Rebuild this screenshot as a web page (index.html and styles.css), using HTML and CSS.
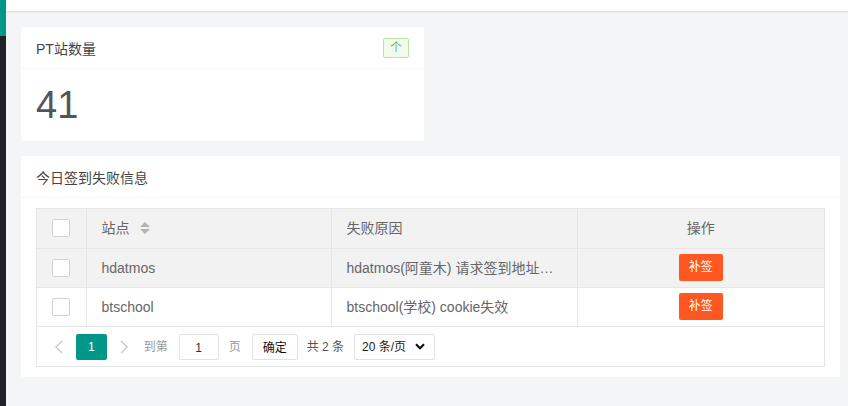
FILE: index.html
```html
<!DOCTYPE html>
<html lang="zh-CN">
<head>
  <meta charset="UTF-8" />
  <meta name="viewport" content="width=device-width, initial-scale=1.0"/>
  <title>PT站签到</title>
  <link rel="stylesheet" href="styles.css">
</head>
<body>
  <div class="side">
    <div class="side-logo"></div>
  </div>

  <div class="main">
    <div class="header"></div>

    <div class="content">
      <div class="card card-small">
        <div class="card-header">
          <span>PT站数量</span>
          <span class="badge">个</span>
        </div>
        <div class="card-body">
          <p class="big-font">41</p>
        </div>
      </div>

      <div class="card">
        <div class="card-header">
          <span>今日签到失败信息</span>
        </div>
        <div class="card-body">
          <div class="table-box">
            <table class="table">
              <colgroup>
                <col style="width: 49px">
                <col style="width: 245px">
                <col style="width: 246px">
                <col>
              </colgroup>
              <thead>
                <tr>
                  <th class="check-cell"><span class="checkbox"></span></th>
                  <th>
                    <span class="sort-title">站点
                      <span class="sort">
                        <i class="sort-up"></i>
                        <i class="sort-down"></i>
                      </span>
                    </span>
                  </th>
                  <th>失败原因</th>
                  <th class="center">操作</th>
                </tr>
              </thead>
              <tbody>
                <tr class="hover">
                  <td class="check-cell"><span class="checkbox"></span></td>
                  <td><div class="cell">hdatmos</div></td>
                  <td><div class="cell">hdatmos(阿童木) 请求签到地址…</div></td>
                  <td class="action-cell"><button class="btn-danger">补签</button></td>
                </tr>
                <tr>
                  <td class="check-cell"><span class="checkbox"></span></td>
                  <td><div class="cell">btschool</div></td>
                  <td><div class="cell">btschool(学校) cookie失效</div></td>
                  <td class="action-cell"><button class="btn-danger">补签</button></td>
                </tr>
              </tbody>
            </table>

            <div class="pager">
              <a class="page-arrow">
                <svg width="8" height="14" viewBox="0 0 8 14"><path d="M7 1 L1 7 L7 13" fill="none" stroke="#c9c9c9" stroke-width="1.4"/></svg>
              </a>
              <span class="page-curr">1</span>
              <a class="page-arrow">
                <svg width="8" height="14" viewBox="0 0 8 14"><path d="M1 1 L7 7 L1 13" fill="none" stroke="#c9c9c9" stroke-width="1.4"/></svg>
              </a>
              <span class="page-text skip-label">到第</span>
              <span class="page-input">1</span>
              <span class="page-text">页</span>
              <button class="page-btn">确定</button>
              <span class="page-count">共 2 条</span>
              <span class="page-limit">
                20 条/页
                <svg width="10" height="7" viewBox="0 0 10 7"><path d="M1 1.2 L5 5.2 L9 1.2" fill="none" stroke="#111" stroke-width="2.2"/></svg>
              </span>
            </div>
          </div>
        </div>
      </div>
    </div>
  </div>
</body>
</html>
```

FILE: styles.css
```css
* {
  margin: 0;
  padding: 0;
  box-sizing: border-box;
}

body {
  font-family: "Liberation Sans", "Noto Sans CJK SC", sans-serif;
  font-size: 14px;
  color: #666;
  background-color: #f4f5f7;
  display: flex;
  min-height: 100vh;
}

.side {
  width: 6px;
  flex-shrink: 0;
  background-color: #20222a;
}

.side-logo {
  height: 36px;
  background-color: #009688;
}

.main {
  flex: 1;
  min-width: 0;
}

.header {
  height: 12px;
  background-color: #fff;
  border-bottom: 1px solid #e2e2e2;
  box-shadow: 0 1px 2px rgba(0, 0, 0, 0.05);
}

.content {
  display: flex;
  flex-direction: column;
  align-items: flex-start;
  gap: 15px;
  padding: 15px 8px 15px 15px;
}

.card {
  width: 100%;
  background-color: #fff;
  border-radius: 2px;
}

.card-small {
  width: 403px;
}

.card-header {
  height: 42px;
  padding: 0 15px;
  display: flex;
  align-items: center;
  justify-content: space-between;
  border-bottom: 1px solid #f6f6f6;
  color: #444;
}

.card-body {
  padding: 10px 15px;
}

.badge {
  height: 20px;
  line-height: 18px;
  padding: 0 6px;
  font-size: 12px;
  color: #5fb878;
  background-color: #f2fbeb;
  border: 1px solid #b8e6a0;
  border-radius: 2px;
}

.big-font {
  height: 52px;
  line-height: 52px;
  font-size: 38px;
  color: #555;
}

.table-box {
  border: 1px solid #e6e6e6;
}

.table {
  width: 100%;
  table-layout: fixed;
  border-collapse: collapse;
}

.table th,
.table td {
  height: 39px;
  padding: 0 15px;
  line-height: 20px;
  text-align: left;
  font-weight: normal;
  vertical-align: middle;
  border-right: 1px solid #e6e6e6;
  border-bottom: 1px solid #e6e6e6;
  color: #666;
}

.table th:last-child,
.table td:last-child {
  border-right: none;
}

.table thead tr,
.table tr.hover {
  background-color: #f2f2f2;
}

.table .center,
.table .action-cell {
  text-align: center;
}

.cell {
  height: 20px;
  white-space: nowrap;
  overflow: hidden;
}

.table .check-cell {
  text-align: center;
  padding: 0;
  line-height: 0;
}

.checkbox {
  display: inline-block;
  width: 18px;
  height: 18px;
  vertical-align: middle;
  background-color: #fff;
  border: 1px solid #d2d2d2;
  border-radius: 2px;
}

.sort-title {
  display: inline-flex;
  align-items: center;
}

.sort {
  display: inline-flex;
  flex-direction: column;
  gap: 2px;
  margin-left: 10px;
}

.sort i {
  width: 0;
  height: 0;
  border-left: 5px solid transparent;
  border-right: 5px solid transparent;
}

.sort-up {
  border-bottom: 5px solid #b2b2b2;
}

.sort-down {
  border-top: 5px solid #b2b2b2;
}

.table .action-cell {
  line-height: 0;
}

.btn-danger {
  height: 27px;
  line-height: 27px;
  padding: 0 10px;
  font-family: inherit;
  font-size: 12px;
  color: #fff;
  background-color: #ff5722;
  border: none;
  border-radius: 2px;
  vertical-align: middle;
}

.pager {
  height: 39px;
  padding: 7px 7px 0;
  display: flex;
  align-items: flex-start;
  font-size: 12px;
}

.pager > * {
  height: 26px;
  line-height: 26px;
  flex-shrink: 0;
}

.page-arrow {
  width: 30px;
  display: flex;
  align-items: center;
  justify-content: center;
}

.page-curr {
  margin: 0 2px;
  padding: 0 12px;
  color: #fff;
  background-color: #009688;
  border-radius: 2px;
}

.page-text {
  color: #999;
}

.skip-label {
  margin-left: 5px;
}

.page-input {
  width: 40px;
  margin: 0 10px 0 11px;
  text-align: center;
  color: #333;
  border: 1px solid #e2e2e2;
  border-radius: 2px;
}

.page-btn {
  margin-left: 11px;
  padding: 0 10px;
  font-family: inherit;
  font-size: 12px;
  color: #111;
  background-color: #fff;
  border: 1px solid #e2e2e2;
  border-radius: 2px;
}

.page-count {
  margin-left: 9px;
  color: #555;
}

.page-limit {
  width: 81px;
  margin-left: 10px;
  padding: 0 9px 0 7px;
  display: flex;
  align-items: center;
  justify-content: space-between;
  color: #222;
  border: 1px solid #e2e2e2;
  border-radius: 2px;
}
```
